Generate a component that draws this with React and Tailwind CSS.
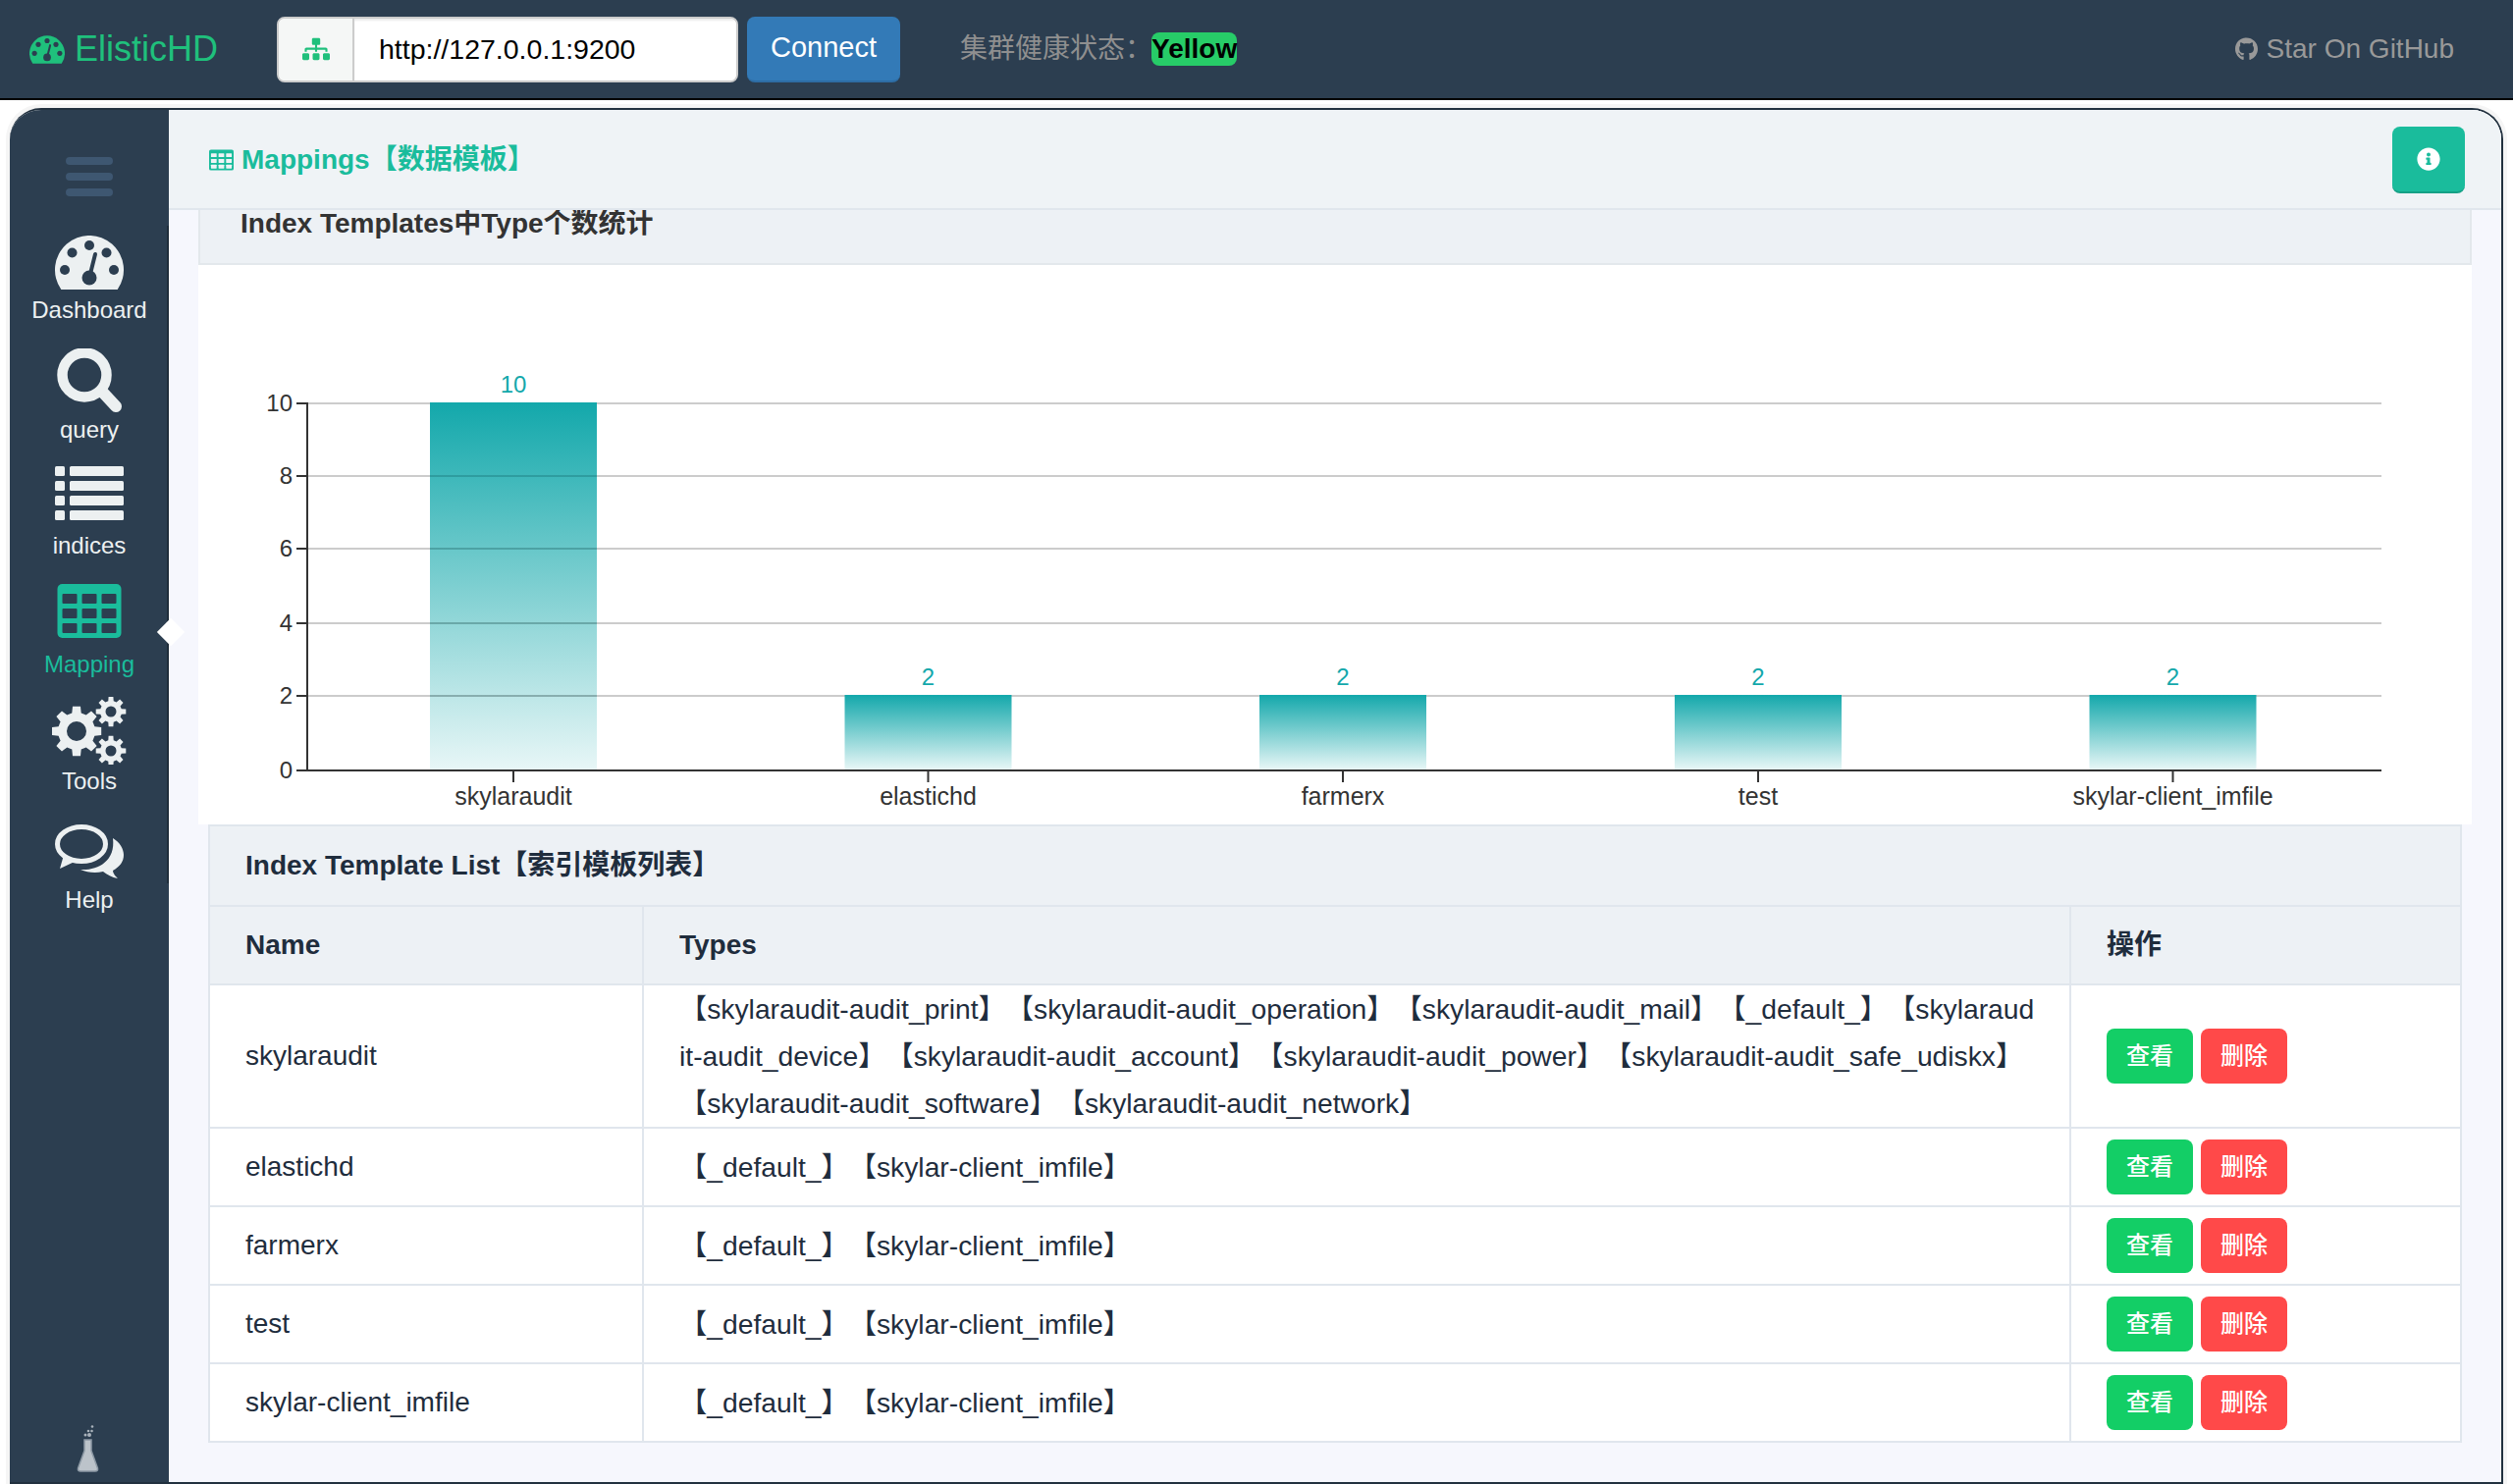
import React from 'react';
import { FaSitemap, FaGithub, FaInfoCircle } from 'react-icons/fa';

const sans = "font-['Liberation_Sans','Noto_Sans_CJK_SC',sans-serif]";

const Dashboard = ({ className, color = '#ecf0f1', bg = '#2c3e50' }) => (
    <svg viewBox="0 0 70 55" className={className}>
        <path d="M6.3 55A35 35 0 1 1 63.7 55Z" fill={color} />
        <circle cx="35" cy="10" r="5" fill={bg} />
        <circle cx="17.5" cy="17.5" r="5" fill={bg} />
        <circle cx="52.5" cy="17.5" r="5" fill={bg} />
        <circle cx="10" cy="35" r="5" fill={bg} />
        <circle cx="60" cy="35" r="5" fill={bg} />
        <circle cx="35" cy="43" r="7.5" fill={bg} />
        <path d="M35 43L41 19" stroke={bg} strokeWidth="4" strokeLinecap="round" />
    </svg>
);

const Search = () => (
    <svg viewBox="0 0 66 65" className="w-[66px] h-[65px]" fill="none" stroke="#ecf0f1">
        <circle cx="28" cy="27" r="22.5" strokeWidth="10.5" />
        <path d="M47 45L60 59" strokeWidth="12" strokeLinecap="round" />
    </svg>
);

const ListIcon = () => (
    <svg viewBox="0 0 70 55" className="w-[70px] h-[55px]" fill="#ecf0f1">
        {[0, 15, 30, 45].map((y) => (
            <g key={y}>
                <rect x="0" y={y} width="10" height="10" rx="1.5" />
                <rect x="15" y={y} width="55" height="10" rx="1.5" />
            </g>
        ))}
    </svg>
);

const TableIcon = ({ className, bg = '#2c3e50' }) => (
    <svg viewBox="0 0 65 55" className={className}>
        <rect width="65" height="55" rx="5" fill="#1abc9c" />
        {[10, 25, 40].map((y) =>
            [5, 25, 45].map((x) => (
                <rect key={`${x}-${y}`} x={x} y={y} width="15" height="10" rx="1" fill={bg} />
            ))
        )}
    </svg>
);

// cog outline with a hole, fill-rule evenodd
const gearPath = (cx, cy, ro, ri, hole, teeth) => {
    let d = '';
    const step = (Math.PI * 2) / teeth;
    for (let i = 0; i < teeth; i++) {
        const a = i * step - Math.PI / 2;
        const pts = [
            [ri, a - step * 0.32],
            [ro, a - step * 0.2],
            [ro, a + step * 0.2],
            [ri, a + step * 0.32],
        ];
        pts.forEach(([r, t], j) => {
            const x = (cx + r * Math.cos(t)).toFixed(1);
            const y = (cy + r * Math.sin(t)).toFixed(1);
            d += `${i === 0 && j === 0 ? 'M' : 'L'}${x} ${y}`;
        });
    }
    d += `ZM${cx - hole} ${cy}a${hole} ${hole} 0 1 0 ${hole * 2} 0a${hole} ${hole} 0 1 0 ${-hole * 2} 0Z`;
    return d;
};

const Gears = () => (
    <svg viewBox="0 0 76 69" className="w-[76px] h-[69px]" fill="#ecf0f1" fillRule="evenodd">
        <path d={gearPath(25, 35, 25.5, 19, 10, 8)} />
        <path d={gearPath(60, 15, 15.5, 11, 5.5, 8)} />
        <path d={gearPath(60, 55, 15.5, 11, 5.5, 8)} />
    </svg>
);

const Comments = () => (
    <svg viewBox="0 0 70 55" className="w-[70px] h-[55px]">
        <polygon points="9,31 5,45 22,37" fill="#ecf0f1" />
        <ellipse cx="27" cy="20" rx="24.5" ry="17.5" fill="#2c3e50" stroke="#ecf0f1" strokeWidth="5" />
        <path d="M59 14C66 18 70 25 70 31C70 38 66 43 59 47C59 50 62 53 64 55C58 54 53 51 49 48C41 50 33 49 26 46C43 47 62 38 59 14Z" fill="#ecf0f1" />
    </svg>
);

const Flask = () => (
    <svg viewBox="0 0 23 48" className="w-[23px] h-[48px]">
        <path d="M8 15V26L1.5 44Q1 47 4 47H19Q22 47 21.5 44L15 26V15Z" fill="#bcc3ca" stroke="#8d99a5" strokeWidth="1.5" />
        <circle cx="9" cy="10" r="1.5" fill="#a9b2bb" />
        <circle cx="13" cy="10" r="2" fill="#a9b2bb" />
        <circle cx="12" cy="6" r="1.3" fill="#a9b2bb" />
        <circle cx="15.5" cy="6" r="1.3" fill="#a9b2bb" />
        <circle cx="16" cy="1.5" r="1.3" fill="#a9b2bb" />
    </svg>
);

const navItems = [
    { label: 'Dashboard', height: 'h-[120px]', gap: 'mb-[5px]', icon: <Dashboard className="w-[70px] h-[55px]" /> },
    { label: 'query', height: 'h-[122px]', gap: 'mb-[2px]', icon: <Search /> },
    { label: 'indices', height: 'h-[118px]', gap: 'mb-[10px]', icon: <ListIcon /> },
    { label: 'Mapping', height: 'h-[121px]', gap: 'mb-[11px]', active: true, icon: <TableIcon className="w-[66px] h-[55px]" /> },
    { label: 'Tools', height: 'h-[119px]', gap: 'mb-[1px]', icon: <Gears /> },
    { label: 'Help', height: 'h-[121px]', gap: 'mb-[6px]', icon: <Comments /> },
];

const Sidebar = () => (
    <div className="relative w-[162px] shrink-0 bg-[#2c3e50] flex flex-col items-center">
        <div className="mt-[48px] mb-[10px] flex flex-col gap-2">
            <div className="w-[48px] h-2 rounded-sm bg-[#3e5771]" />
            <div className="w-[48px] h-2 rounded-sm bg-[#3e5771]" />
            <div className="w-[48px] h-2 rounded-sm bg-[#3e5771]" />
        </div>
        {navItems.map((item) => (
            <div key={item.label} className={`${item.height} flex flex-col items-center justify-end`}>
                <div className={item.gap}>{item.icon}</div>
                <div className={`h-[30px] leading-[31px] text-[24px] ${item.active ? 'text-[#1abc9c]' : 'text-[#ecf0f1]'}`}>
                    {item.label}
                </div>
            </div>
        ))}
        <div className="mt-auto mb-[10px] mr-[3px]"><Flask /></div>
        <div className="absolute right-0 top-[118px] h-[670px] w-[2px] bg-[#1f2d3a]" />
        <div className="absolute right-[-12px] top-[522px] w-5 h-5 rotate-45 bg-white" />
    </div>
);

const bars = [
    { name: 'skylaraudit', value: 10, x: 523 },
    { name: 'elastichd', value: 2, x: 945.5 },
    { name: 'farmerx', value: 2, x: 1368 },
    { name: 'test', value: 2, x: 1791 },
    { name: 'skylar-client_imfile', value: 2, x: 2213.5 },
];
const ticks = [
    { v: 0, y: 785 },
    { v: 2, y: 709 },
    { v: 4, y: 635 },
    { v: 6, y: 559 },
    { v: 8, y: 485 },
    { v: 10, y: 411 },
];

const Chart = () => (
    <svg viewBox="202 270 2316 570" className="block w-[2316px] h-[570px]" fontFamily="'Liberation Sans', sans-serif">
        <defs>
            <linearGradient id="barFill" x1="0" y1="0" x2="0" y2="1">
                <stop offset="0" stopColor="#13a8ab" />
                <stop offset="1" stopColor="#13a8ab" stopOpacity="0.1" />
            </linearGradient>
        </defs>
        {ticks.filter((t) => t.v > 0).map((t) => (
            <line key={t.v} x1="313" x2="2426" y1={t.y} y2={t.y} stroke="#ccc" strokeWidth="2" />
        ))}
        {bars.map((b) => {
            const top = b.value === 10 ? 410 : 708;
            return (
                <g key={b.name}>
                    <rect x={b.x - 85} y={top} width="170" height={784 - top} fill="url(#barFill)" />
                    <text x={b.x} y={top - 10} textAnchor="middle" fontSize="24" fill="#13a8ab">{b.value}</text>
                    <line x1={b.x} x2={b.x} y1="785" y2="797" stroke="#333" strokeWidth="2" />
                    <text x={b.x} y="820" textAnchor="middle" fontSize="25" fill="#333">{b.name}</text>
                </g>
            );
        })}
        {ticks.filter((t) => t.v > 0 && t.v < 10).map((t) => (
            <g key={t.v}>
                <line x1="438" x2="608" y1={t.y} y2={t.y} stroke="#000" strokeOpacity="0.1" strokeWidth="2" />
            </g>
        ))}
        <line x1="313" x2="313" y1="410" y2="786" stroke="#333" strokeWidth="2" />
        <line x1="302" x2="2426" y1="785" y2="785" stroke="#333" strokeWidth="2" />
        {ticks.map((t) => (
            <g key={t.v}>
                <line x1="302" x2="313" y1={t.y} y2={t.y} stroke="#333" strokeWidth="2" />
                <text x="298" y={t.y + 8} textAnchor="end" fontSize="24" fill="#333">{t.v}</text>
            </g>
        ))}
    </svg>
);

const templates = [
    {
        name: 'skylaraudit',
        types: '【skylaraudit-audit_print】【skylaraudit-audit_operation】【skylaraudit-audit_mail】【_default_】【skylaraudit-audit_device】【skylaraudit-audit_account】【skylaraudit-audit_power】【skylaraudit-audit_safe_udiskx】【skylaraudit-audit_software】【skylaraudit-audit_network】',
        rowHeight: 'h-[146px]',
    },
    { name: 'elastichd', types: '【_default_】【skylar-client_imfile】', rowHeight: 'h-[80px]' },
    { name: 'farmerx', types: '【_default_】【skylar-client_imfile】', rowHeight: 'h-[80px]' },
    { name: 'test', types: '【_default_】【skylar-client_imfile】', rowHeight: 'h-[80px]' },
    { name: 'skylar-client_imfile', types: '【_default_】【skylar-client_imfile】', rowHeight: 'h-[80px]' },
];

const TemplateTable = () => (
    <div className="mx-[10px] border-x-2 border-t-2 border-[#e0e6ed] text-[#1f2d3d]">
        <div className="h-[82px] pl-[36px] flex items-center bg-[#edf1f5] border-b-2 border-[#e0e6ed] font-bold">
            Index Template List【索引模板列表】
        </div>
        <table className="w-full table-fixed border-separate border-spacing-0">
            <thead>
                <tr className="h-[80px] bg-[#edf1f5] text-left">
                    <th className="w-[442px] pl-[36px] font-bold border-r-2 border-b-2 border-[#e0e6ed]">Name</th>
                    <th className="pl-[36px] font-bold border-r-2 border-b-2 border-[#e0e6ed]">Types</th>
                    <th className="w-[396px] pl-[36px] font-bold border-b-2 border-[#e0e6ed]">操作</th>
                </tr>
            </thead>
            <tbody className="bg-white">
                {templates.map((t) => (
                    <tr key={t.name} className={t.rowHeight}>
                        <td className="pl-[36px] border-r-2 border-b-2 border-[#e0e6ed]">{t.name}</td>
                        <td className="pl-[36px] pr-[32px] text-[28.25px] leading-[48px] break-all border-r-2 border-b-2 border-[#e0e6ed]">{t.types}</td>
                        <td className="pl-[36px] border-b-2 border-[#e0e6ed]">
                            <div className="flex gap-2 text-[24px] text-white font-medium">
                                <button className="w-[88px] h-[56px] rounded-lg bg-[#13ce66]">查看</button>
                                <button className="w-[88px] h-[56px] rounded-lg bg-[#ff4949]">删除</button>
                            </div>
                        </td>
                    </tr>
                ))}
            </tbody>
        </table>
    </div>
);

const App = () => (
    <div className={`w-[2560px] h-[1512px] overflow-hidden bg-white text-[28px] ${sans} [text-spacing-trim:space-all]`}>
        <nav className="h-[102px] bg-[#2c3e50] border-b-2 border-black pl-[30px] pr-[60px] flex items-center">
            <div className="w-[252px] flex items-center gap-[10px] text-[#1fc07c]">
                <Dashboard className="w-[36px] h-[29px]" color="#1fc07c" />
                <span className="text-[36px]">ElisticHD</span>
            </div>
            <div className="w-[470px] h-[67px] flex rounded-lg border-2 border-[#ccc] bg-white overflow-hidden">
                <div className="w-[77px] flex items-center justify-center bg-[#f5f7f6] border-r-2 border-[#ccc] text-[#1fc07c]">
                    <FaSitemap className="w-[28px] h-[24px]" />
                </div>
                <input
                    readOnly
                    value="http://127.0.0.1:9200"
                    className="flex-1 min-w-0 pl-[25px] text-[28.5px] text-black bg-white outline-none shadow-[inset_0_2px_2px_rgba(0,0,0,0.08)]"
                />
            </div>
            <button className="ml-[9px] w-[156px] h-[67px] rounded-lg bg-[#337ab7] border-b-2 border-[#2e6da4] text-white text-[29px]">
                Connect
            </button>
            <div className="ml-[61px] flex items-center text-[#8f8f8f]">
                <span>集群健康状态：</span>
                <span className="ml-[-1px] h-[34px] leading-[34px] rounded-lg bg-[#27cc68] text-black font-bold">Yellow</span>
            </div>
            <div className="ml-auto flex items-center gap-[9px] text-[#999]">
                <FaGithub className="w-[23px] h-[26px]" />
                <span>Star On GitHub</span>
            </div>
        </nav>
        <div className="pt-1 px-[6px]">
            <div className="h-[1406px] border-x-4 border-t-4 border-[#f5f5f5] rounded-t-[36px]">
                <div className="h-[1402px] flex border-t-2 border-r-2 border-b-2 border-[#22313f] rounded-t-[32px] overflow-hidden">
                    <Sidebar />
                    <main className="flex-1 min-w-0 flex flex-col bg-[#f6f7fd]">
                        <header className="h-[102px] shrink-0 bg-[#eff3f6] border-b-2 border-[#e0e6ed] pt-[2px] pl-[41px] pr-[37px] flex items-center justify-between">
                            <div className="flex items-center gap-2 text-[#1abc9c] font-bold">
                                <TableIcon className="w-[25px] h-[22px]" bg="#eff3f6" />
                                <span>Mappings【数据模板】</span>
                            </div>
                            <button className="w-[74px] h-[68px] rounded-lg bg-[#1abc9c] border-b-2 border-[#16a085] flex items-center justify-center text-white">
                                <FaInfoCircle className="w-[24px] h-[24px]" />
                            </button>
                        </header>
                        <div className="flex-1 min-h-0 overflow-hidden pl-[30px] pr-[30px]">
                            <div className="h-[56px] pl-[41px] bg-[#edf1f5] border-x-2 border-b-2 border-[#e3e8ec] text-[#333] font-bold leading-[28px]">
                                Index Templates中Type个数统计
                            </div>
                            <div className="bg-white"><Chart /></div>
                            <TemplateTable />
                        </div>
                    </main>
                </div>
            </div>
        </div>
    </div>
);

export default App;
